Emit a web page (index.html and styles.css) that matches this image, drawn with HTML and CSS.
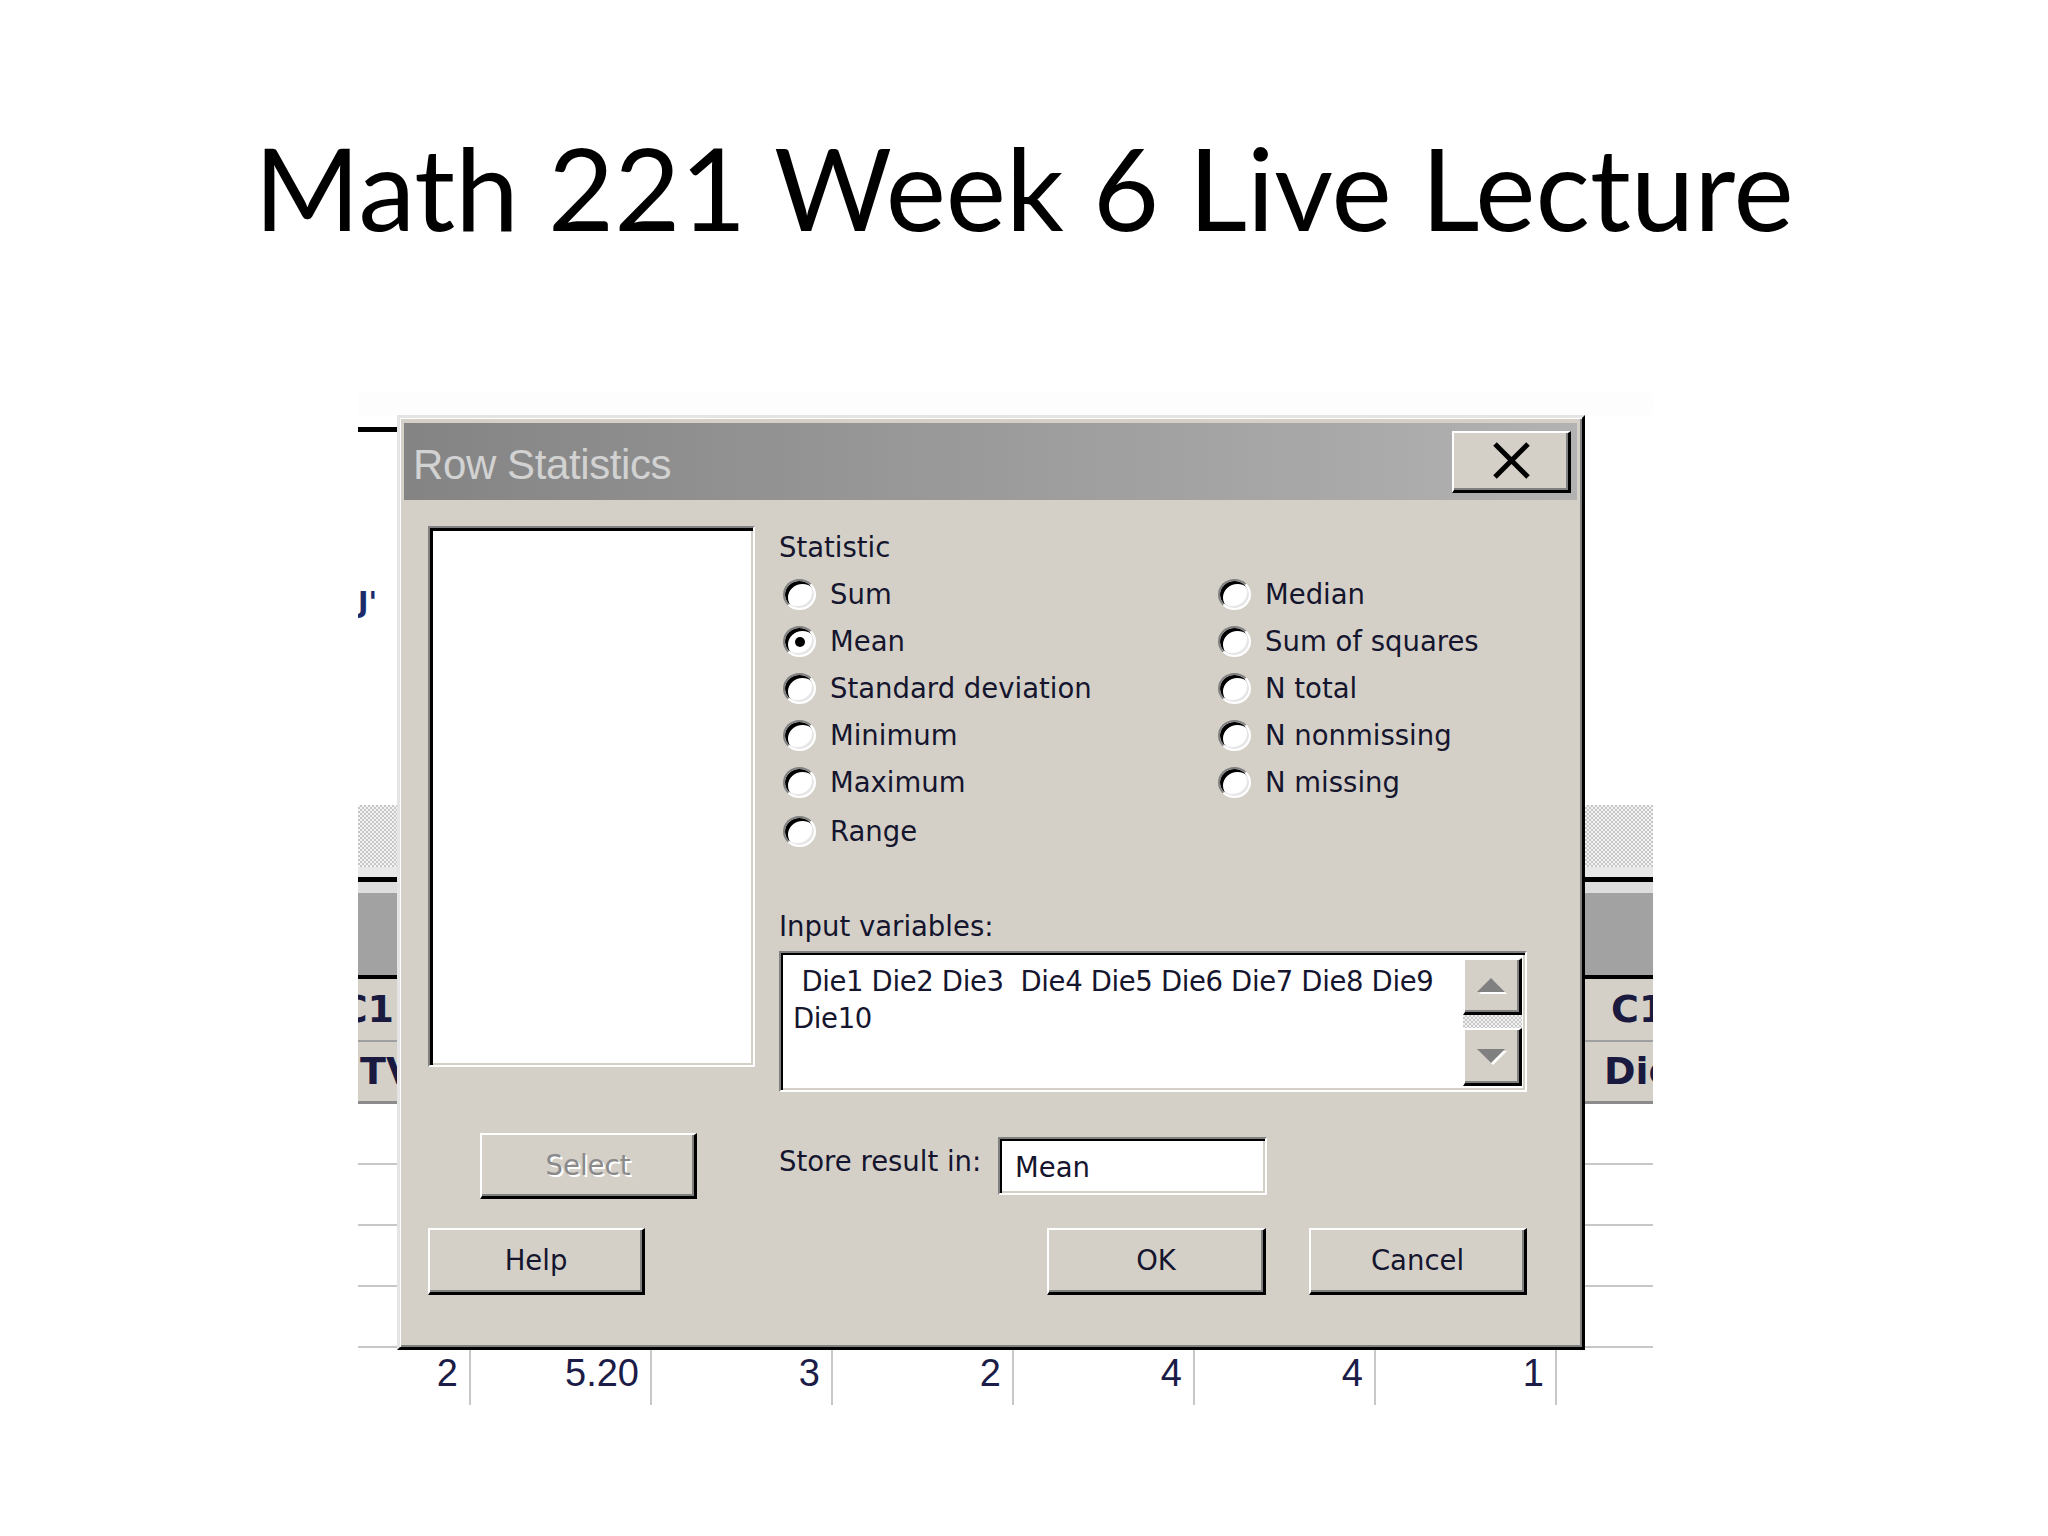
FILE: index.html
```html
<!DOCTYPE html>
<html lang="en">
<head>
<meta charset="utf-8">
<title>Math 221 Week 6 Live Lecture</title>
<link rel="stylesheet" href="styles.css">
</head>
<body>
<div class="slide">
  <h1 class="slide-title">Math 221 Week 6 Live Lecture</h1>
  <div class="shot">
    <div class="ws-strip ws-left">
      <div class="ws-topline"></div>
      <div class="ws-frag">J'</div>
      <div class="ws-hatch"></div>
      <div class="ws-light1"></div>
      <div class="ws-black"></div>
      <div class="ws-light2"></div>
      <div class="ws-gray"></div>
      <div class="ws-black2"></div>
      <div class="ws-cell ws-cell-end">C1</div>
      <div class="ws-line"></div>
      <div class="ws-cell ws-cell2 ws-cell-start">TV</div>
      <div class="ws-line2"></div>
      <div class="ws-row"></div>
      <div class="ws-row"></div>
      <div class="ws-row"></div>
      <div class="ws-row"></div>
    </div>

    <div class="dialog">
      <div class="dlg-titlebar">
        <span class="dlg-title">Row Statistics</span>
        <div class="dlg-close">
          <svg width="37" height="37" viewBox="0 0 37 37"><path d="M2 2 L35 35 M35 2 L2 35" stroke="#000" stroke-width="5" fill="none"/></svg>
        </div>
      </div>
      <div class="dlg-body">
        <div class="dlg-main">
          <div class="listbox"></div>
          <div class="panel">
            <div class="lbl">Statistic</div>
            <div class="radio-grid">
              <div class="radio-col">
                <div class="radio"><span class="rb"></span><span>Sum</span></div>
                <div class="radio"><span class="rb"><span class="dot"></span></span><span>Mean</span></div>
                <div class="radio"><span class="rb"></span><span>Standard deviation</span></div>
                <div class="radio"><span class="rb"></span><span>Minimum</span></div>
                <div class="radio"><span class="rb"></span><span>Maximum</span></div>
                <div class="radio radio-last"><span class="rb"></span><span>Range</span></div>
              </div>
              <div class="radio-col">
                <div class="radio"><span class="rb"></span><span>Median</span></div>
                <div class="radio"><span class="rb"></span><span>Sum of squares</span></div>
                <div class="radio"><span class="rb"></span><span>N total</span></div>
                <div class="radio"><span class="rb"></span><span>N nonmissing</span></div>
                <div class="radio"><span class="rb"></span><span>N missing</span></div>
              </div>
            </div>
            <div class="lbl lbl-input">Input variables:</div>
            <div class="varbox">
              <div class="vartext"> Die1 Die2 Die3  Die4 Die5 Die6 Die7 Die8 Die9
Die10</div>
              <div class="scroll">
                <div class="sb-btn sb-up">
                  <svg width="33" height="18" viewBox="0 0 33 18"><polygon points="3,17 17,3 31,17" fill="#fff"/><polygon points="1,15 15,1 29,15" fill="#808080"/></svg>
                </div>
                <div class="sb-track"></div>
                <div class="sb-btn sb-down">
                  <svg width="33" height="18" viewBox="0 0 33 18"><polygon points="3,3 31,3 17,17" fill="#fff"/><polygon points="1,1 29,1 15,15" fill="#808080"/></svg>
                </div>
              </div>
            </div>
          </div>
        </div>
        <div class="dlg-row2">
          <div class="btn btn-select">Select</div>
          <div class="store">
            <span class="store-lbl">Store result in:</span>
            <div class="field">Mean</div>
          </div>
        </div>
        <div class="dlg-row3">
          <div class="btn btn-help">Help</div>
          <div class="btn-group">
            <div class="btn btn-ok">OK</div>
            <div class="btn btn-cancel">Cancel</div>
          </div>
        </div>
      </div>
    </div>

    <div class="ws-strip ws-right">
      <div class="ws-hatch"></div>
      <div class="ws-light1"></div>
      <div class="ws-black"></div>
      <div class="ws-light2"></div>
      <div class="ws-gray"></div>
      <div class="ws-black2"></div>
      <div class="ws-cell ws-c1r">C1</div>
      <div class="ws-line"></div>
      <div class="ws-cell ws-cell2 ws-dier">Die</div>
      <div class="ws-line2"></div>
      <div class="ws-row"></div>
      <div class="ws-row"></div>
      <div class="ws-row"></div>
      <div class="ws-row"></div>
    </div>

    <div class="ws-bottom">
      <div class="num num-first">2</div>
      <div class="num">5.20</div>
      <div class="num">3</div>
      <div class="num">2</div>
      <div class="num">4</div>
      <div class="num">4</div>
      <div class="num">1</div>
    </div>
  </div>
</div>
</body>
</html>
```

FILE: styles.css
```css
html, body {
  margin: 0;
  padding: 0;
  background: #ffffff;
}

.slide {
  width: 2048px;
  height: 1536px;
  overflow: hidden;
  background: #ffffff;
}

.slide-title {
  margin: 121px 0 0 0;
  font-family: Lato, "Liberation Sans", sans-serif;
  font-weight: 400;
  font-size: 114px;
  line-height: 132px;
  text-align: center;
  color: #000000;
}

/* screenshot region */
.shot {
  margin: 140px 0 0 358px;
  width: 1295px;
  display: grid;
  grid-template-columns: 39px 1188px 68px;
  grid-template-rows: 22px 935px 55px;
  background: #fdfdfd;
}

/* worksheet strips visible around dialog */
.ws-strip {
  grid-row: 2;
  display: flex;
  flex-direction: column;
  overflow: hidden;
  background: #ffffff;
}
.ws-strip > * { flex-shrink: 0; }
.ws-left { grid-column: 1; }
.ws-right { grid-column: 3; }

.ws-topline {
  margin-top: 12px;
  height: 5px;
  background: #000000;
}
.ws-frag {
  margin-top: 155px;
  height: 32px;
  font-family: "DejaVu Sans", sans-serif;
  font-weight: bold;
  font-size: 28px;
  line-height: 32px;
  color: #1b2b6b;
  white-space: nowrap;
}
.ws-hatch {
  margin-top: 186px;
  height: 62px;
  background: repeating-conic-gradient(#c6c6c6 0 25%, #f4f4f4 0 50%) 0 0 / 4px 4px;
}
.ws-right .ws-hatch { margin-top: 390px; }
.ws-light1 { height: 10px; background: #e8e8e8; }
.ws-black { height: 5px; background: #000000; }
.ws-light2 { height: 11px; background: #dedede; }
.ws-gray { height: 82px; background: #a2a2a2; }
.ws-black2 { height: 4px; background: #000000; }
.ws-cell {
  height: 61px;
  background: #d4d0c8;
  display: flex;
  align-items: center;
  font-family: "DejaVu Sans", sans-serif;
  font-weight: bold;
  font-size: 38px;
  line-height: 61px;
  color: #1a1a40;
  white-space: nowrap;
}
.ws-cell2 { height: 59px; line-height: 59px; }
.ws-cell-end { justify-content: flex-end; padding-right: 3px; }
.ws-cell-start { padding-left: 2px; }
.ws-c1r { padding-left: 26px; }
.ws-dier { padding-left: 19px; }
.ws-line { height: 2px; background: #a0a0a0; }
.ws-line2 { height: 3px; background: #8c8c8c; }
.ws-row {
  height: 59px;
  border-bottom: 2px solid #c8c8c8;
}

/* bottom row of worksheet values */
.ws-bottom {
  grid-row: 3;
  grid-column: 1 / -1;
  display: flex;
  font-family: "Liberation Sans", sans-serif;
  font-size: 38px;
  line-height: 46px;
  color: #1c1c48;
  background: #ffffff;
}
.num {
  box-sizing: border-box;
  width: 181px;
  height: 55px;
  border-right: 2px solid #c8c8c8;
  text-align: right;
  padding-right: 11px;
}
.num-first { width: 113px; }

/* dialog */
.dialog {
  grid-row: 2;
  grid-column: 2;
  box-sizing: border-box;
  background: #d4d0c8;
  border: 3px solid;
  border-color: #e4e4e4 #000000 #000000 #e4e4e4;
  box-shadow: inset 1px 1px 0 #ffffff, inset -2px -2px 0 #808080;
  padding: 5px 5px 0 4px;
  display: flex;
  flex-direction: column;
}

.dlg-titlebar {
  height: 77px;
  flex-shrink: 0;
  display: flex;
  justify-content: space-between;
  align-items: flex-start;
  background: linear-gradient(to right, #848484, #b2b2b2);
}
.dlg-title {
  padding: 18px 0 0 9px;
  font-family: "Liberation Sans", sans-serif;
  font-size: 42px;
  line-height: 47px;
  letter-spacing: -0.4px;
  color: #d2d2d2;
}
.dlg-close {
  margin: 8px 6px 0 0;
  width: 119px;
  height: 62px;
  box-sizing: border-box;
  background: #d4d0c8;
  border-style: solid;
  border-width: 2px 3px 3px 2px;
  border-color: #ffffff #000000 #000000 #ffffff;
  box-shadow: inset -2px -2px 0 #808080;
  display: flex;
  align-items: center;
  justify-content: center;
  padding-bottom: 3px;
}

.dlg-body {
  flex: 1;
  padding: 26px 0 0 24px;
  display: flex;
  flex-direction: column;
  font-family: "DejaVu Sans", sans-serif;
  font-size: 27.5px;
  color: #15152e;
}

.dlg-main {
  display: grid;
  grid-template-columns: 327px 748px;
  column-gap: 24px;
}

.listbox {
  height: 541px;
  box-sizing: border-box;
  background: #ffffff;
  border: 2px solid;
  border-color: #808080 #ffffff #ffffff #808080;
  box-shadow: inset 3px 3px 0 #000000, inset -2px -2px 0 #d4d0c8;
}

.panel {
  display: flex;
  flex-direction: column;
}
.lbl { line-height: 42px; }
.lbl-input { margin-top: 52px; }

.radio-grid {
  margin-top: 3px;
  display: grid;
  grid-template-columns: 435px 1fr;
}
.radio {
  height: 47px;
  display: flex;
  align-items: center;
  gap: 14px;
  padding-left: 4px;
  line-height: 47px;
  white-space: nowrap;
}
.radio-last { margin-top: 3px; height: 44px; }
.rb {
  width: 33px;
  height: 31px;
  box-sizing: border-box;
  flex-shrink: 0;
  border-radius: 50%;
  background: #ffffff;
  border: 2px solid;
  border-color: #808080 #ffffff #ffffff #808080;
  box-shadow: inset 3px 3px 0 #000000, inset -2px -2px 0 #e6e6e6;
  display: flex;
  align-items: center;
  justify-content: center;
}
.dot {
  width: 10px;
  height: 10px;
  border-radius: 50%;
  background: #000000;
}

.varbox {
  margin-top: 4px;
  height: 141px;
  box-sizing: border-box;
  background: #ffffff;
  border: 2px solid;
  border-color: #808080 #ffffff #ffffff #808080;
  box-shadow: inset 2px 2px 0 #000000, inset -2px -2px 0 #d4d0c8;
  display: flex;
}
.vartext {
  flex: 1;
  padding: 10px 0 0 12px;
  white-space: pre;
  line-height: 37px;
  letter-spacing: -0.35px;
}
.scroll {
  width: 59px;
  margin: 5px 3px 4px 0;
  display: flex;
  flex-direction: column;
}
.sb-btn {
  box-sizing: border-box;
  background: #d4d0c8;
  border-style: solid;
  border-width: 2px 3px 3px 2px;
  border-color: #ffffff #000000 #000000 #ffffff;
  box-shadow: inset -2px -2px 0 #808080;
  display: flex;
  align-items: center;
  justify-content: center;
}
.sb-up { height: 57px; }
.sb-down { height: 58px; }
.sb-track {
  height: 13px;
  background: repeating-conic-gradient(#c8c8c8 0 25%, #f2f2f2 0 50%) 0 0 / 4px 4px;
}

.dlg-row2 {
  margin-top: 41px;
  height: 66px;
  display: grid;
  grid-template-columns: 327px 748px;
  column-gap: 24px;
  align-items: center;
}
.dlg-row3 {
  margin-top: 29px;
  height: 67px;
  display: grid;
  grid-template-columns: 327px 748px;
  column-gap: 24px;
}

.btn {
  box-sizing: border-box;
  height: 67px;
  background: #d4d0c8;
  border-style: solid;
  border-width: 2px 3px 3px 2px;
  border-color: #ffffff #000000 #000000 #ffffff;
  box-shadow: inset -2px -2px 0 #808080;
  display: flex;
  align-items: center;
  justify-content: center;
  line-height: 1;
  color: #15152e;
}
.btn-select {
  justify-self: center;
  width: 217px;
  height: 66px;
  margin-left: -6px;
  color: #8a8a8a;
  text-shadow: 2px 2px 0 #ffffff;
}
.btn-help { width: 217px; }
.btn-group {
  display: flex;
  justify-content: flex-end;
  gap: 43px;
}
.btn-ok { width: 219px; }
.btn-cancel { width: 218px; }

.store {
  display: grid;
  grid-template-columns: 219px 269px;
  align-items: start;
}
.store-lbl {
  line-height: 48px;
  white-space: nowrap;
}
.field {
  height: 58px;
  box-sizing: border-box;
  background: #ffffff;
  border: 2px solid;
  border-color: #808080 #ffffff #ffffff #808080;
  box-shadow: inset 2px 2px 0 #000000, inset -2px -2px 0 #d4d0c8;
  padding: 3px 0 0 15px;
  line-height: 51px;
}
```
